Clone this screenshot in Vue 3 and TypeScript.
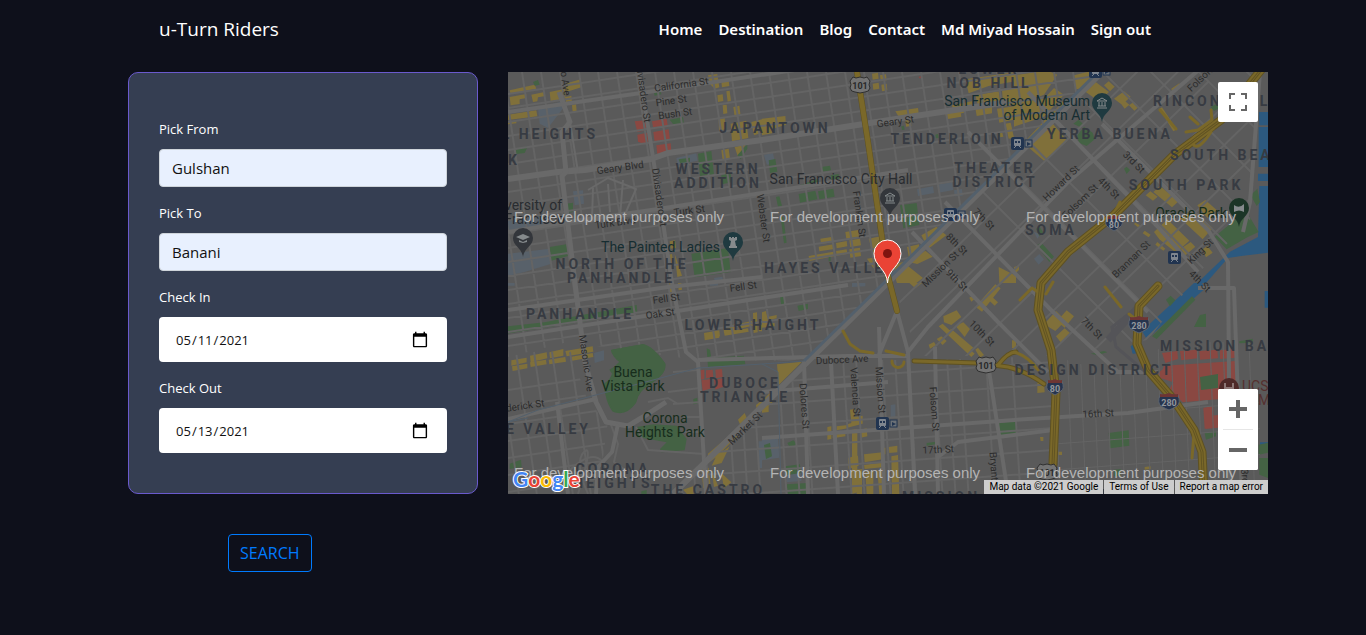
<script setup lang="ts">
import { ref } from 'vue'

interface Tile {
  x: number
  y: number
  shops: string
  parks: string
  clinics?: string
  campus?: string
  water?: string
}
interface Label {
  t: string
  x: number
  y: number
  k: string
  a?: 'start' | 'middle' | 'end'
  r?: number
}

const links = ['Home', 'Destination', 'Blog', 'Contact', 'Md Miyad Hossain', 'Sign out']
const pickFrom = ref('Gulshan')
const pickTo = ref('Banani')
const checkIn = ref('2021-05-11')
const checkOut = ref('2021-05-13')

/* Parallel streets: count lines starting at (x, y), each moved by (sx, sy). */
function streets(x: number, y: number, dx: number, dy: number, sx: number, sy: number, count: number): string {
  let d = ''
  for (let i = 0; i < count; i++) d += `M${x + sx * i} ${y + sy * i}l${dx} ${dy}`
  return d
}

const northGrid = streets(0, 22, 640, -96, 0, 14, 32) + streets(-62, 0, 64, 422, 19, 0, 36)
const southGrid = streets(150, 318, 480, -34, 0, 22, 8) + streets(165, 270, 10, 160, 26, 0, 14) + streets(178, 270, 10, 160, 52, 0, 6)
const eastGrid = streets(520, 348, 240, -18, 0, 26, 5) + streets(533, 270, 6, 160, 13, 0, 18)
const somaGrid = streets(290, 250, 330, -320, 20, 20, 14) + streets(365, 10, 290, 290, 24, -24, 16)
const westGrid = streets(0, 318, 150, -22, 0, 17, 7) + streets(-10, 280, 22, 150, 18, 0, 6)

const tiles: Tile[] = [
  {
    x: 0, y: 0,
    shops: 'M5 55L80 38l5 12L8 66ZM5 75L55 66v12l-20 4v14L8 100ZM70 68l40-8 2 12-22 4-2 12-13 2ZM125 60l47-10v30l-44 8ZM172 35l46-13 4 23-47 15ZM0 128l85-13 3 18-88 11ZM192 100l12-3 2 20-12 2ZM172 75l18-4 2 15-18 4ZM0 150l25-4v8l-25 3ZM600 10l28-4 6 40-14 4-14-14ZM640 28l22-4 2 18-22 4ZM628 70l16-3 2 20-16 3ZM655 58l10-2 4 30-10 3ZM676 105l18-4 4 30-18 4ZM644 100l12-2 2 26-12 2ZM632 142l18-4 3 34-20 4ZM668 155l47-9 6 52-49 10ZM680 225l32-7-22 37ZM640 235l22-5 4 30-22 5ZM730 150l32-8v40l-24 8ZM485 508l16-3 3 22-16 3ZM500 545l22 66-14 4ZM480 548l12-2 4 26-12 2Z',
    parks: 'M75 30l15-6 5 14-15 3ZM20 235l40-13-10 21-25 3ZM485 143l40-8 3 20-30 5ZM570 245l40-8 8 71-42 4ZM175 395l20-3v28l-18 3ZM125 525l50-8 5 35-50 14ZM550 545l110-17 8 72-108 16ZM640 308l28-5 2 28-28 6ZM438 62l20-5 2 10-20 4ZM688 250l30-34v14l-20 32ZM512 262l34-5v12l-30 4Z',
    clinics: 'M380 148l32-3 4 30-28 5ZM432 148l44-8 4 25-44 5ZM388 188l30-6 4 33-22-2-10-4ZM436 180l46-8 4 33-46 5ZM445 220l43-6 2 26-42 10Z',
    campus: 'M90 108l75-20 7 12-52 68-25-13ZM195 358l30-3 3 40-28 5ZM0 545l125-15 5 45-80 25-50 12ZM505 258l60-14 4 22-60 12ZM0 445l110-14 10 30-120 18ZM618 618l25-4 4 18-26 1Z',
  },
  {
    x: 254, y: 0,
    shops: 'M330 5l18-3 2 18-18 3ZM354 10l18-3 2 18-18 3ZM332 35l18-3 2 18-18 3ZM358 38l16-3 2 20-16 3ZM0 140l70-8 2 26-72 22ZM0 170l30-6v20l-30 6ZM400 118l68-10 2 14-60 12ZM430 140l16-2 2 24-16 2ZM610 22l150-22v28l-80 14-60 22ZM640 70l70-12 4 28-66 14ZM720 55l42-8v50l-38 6ZM570 100l60-12 2 16-28 4 2 14-30 6ZM550 126l46-8 2 16-44 8ZM640 108l50-10v26l-46 8ZM705 110l57-8v40l-50 10ZM730 155l16-3 10 45-16 3ZM710 180l10-2 4 16-10 2ZM175 500l38-6 2 16-38 6ZM250 480l38-6 3 20-38 6ZM170 524l45-7 2 14-45 7ZM222 513l32-6 2 16-32 6ZM262 505l32-5 3 20-32 5ZM140 552l74-13 2 14-74 14ZM222 537l32-5 2 14-32 5ZM262 532l32-5 3 25-32 5ZM320 500l36-7 8 50-30 6ZM315 560l70-12 15 30-66 10ZM435 525l36-8 0 24-30 18ZM478 490l45-26 30 26-54 40ZM440 570l50-34 22 18-46 22ZM388 580l35-10 60 48-20 15h-58ZM710 585l52 26v22h-50ZM20 145l5 40-20 3Z',
    parks: 'M20 265l20-4 6 38-22 4ZM178 285l26-4 3 14-28 4ZM110 366l50-10 6 26-52 10ZM168 358l46-8 4 24-46 8ZM414 400l50-7 8 66-48 10ZM108 342l60-22 2 16-60 12ZM206 310l24-4 2 14-24 4ZM418 163l8-2 2 12-8 1ZM520 188l8-2 2 12-8 1ZM56 436l8-2 10 78-8 2ZM42 375l10-2 8 28-12 3ZM200 556l6-2v14h-6Z',
    clinics: 'M470 14l10-2 2 6-10 1Z',
    campus: 'M5 248l28-5 6 30-24 5ZM465 352l48-9 3 20-48 9ZM525 338l45-8 4 24-44 8ZM576 355l24-4 2 20-24 2Z',
  },
  {
    x: 506, y: 0,
    shops: 'M0 10l70-10h40l20 8-40 60-60 22-30 8ZM0 92l90-12 30-32 30 20-60 66-90 30ZM110 130l36-42 16 16-34 44ZM40 200l60-64 60 70-70 60-54-46ZM180 10l40-10h30l-36 48-30 4ZM215 60l30-30 40 30-30 28ZM270 40l14-12 18 16-14 14ZM300 80l30-22 20 16-26 24ZM345 100l14-10 16 14-14 12ZM320 94l12-8 14 12-14 12ZM472 50l24-16 6 10-26 20ZM395 370l14-12 22 16-14 12ZM418 360l20-18 56 46-20 18ZM420 480l40-38 66 64-40 36-50-40ZM500 440l36-28 60 56-30 34ZM550 400l24-16 34 30-28 24ZM500 530l30-20 14 14-30 26ZM566 532l14-10 16 20-20 14ZM364 452l14 8-6 6-12-10ZM392 476l18 12-6 8-18-12ZM430 510l24 20-6 6-24-18ZM0 585l15-5v14l-15 14ZM436 110l8-4 44 66-10 6Z',
    parks: 'M178 155l16-12 14 14-10 8ZM190 190l20-26 26 18 6 20-24 20-24-10ZM330 290l8-6 10 10-10 12ZM68 520l14-8 38 42-14 16ZM602 494l94-78 38 64-34 16-62 36ZM590 105l16-8 12 10-18 10ZM66 470l12-4 10 16-12 10ZM710 370l20-20 8 40-10 12Z',
    campus: 'M60 560l16-14 14 16-16 16ZM60 480l20 6-10 14Z',
    water: 'M734 165h30v120h-30ZM732 305h30v22h-30ZM736 342h26v200l-80 10-40 6-66 75h-26l98-94 84-44ZM734 120h28v40h-26Z',
  },
  {
    x: 0, y: 211,
    shops: 'M10 232l46-8v14l-46 10ZM66 218l50-10 2 18-50 12ZM124 208l42-10v20l-40 8ZM172 204l82-14 2 16-80 14ZM12 250l46-8v14l-44 8ZM66 238l48-8 2 14-48 8ZM122 230l50-8 2 14-50 8ZM186 222l68-12 2 12-68 12ZM484 0h14l2 26-16 2ZM510 0h10l2 20-10 2ZM588 150l46-8 2 18-46 10ZM646 132l36-8v18l-34 8ZM692 122l40-8 2 14-42 10ZM590 160l44-8v12l-44 8ZM648 148l72-12 2 10-72 12ZM735 90l12-2 2 60-12 2ZM752 125h10v20h-10ZM744 366l18-14v30l-14 12ZM600 512l70-60 18 8-60 60-30 22ZM625 520l40-30-24 50-30 8ZM580 560l22-6 6 56-22 6ZM610 558l20 50-12 4ZM640 570l30 28-22 18ZM525 620l30-10 2 23h-20ZM690 410l20-20 6 14-20 20Z',
    parks: 'M0 130L110 118l100-20 176-32 2 24-390 62ZM310 200q50-8 94-16 30 6 68 58 4 30-40 58-40 22-48 60-30 42-70 26-16-20-22-52l-6-30q20-12 26-32l-8-12 34-20Q312 222 310 200ZM596 196l10 4 4 24 98-6 4 26-112 8ZM386 432l50-8 70 4 30 40-6 34-70 6-4-10 20-20-88-16ZM5 542l34-12 2 22-36 6ZM556 348l12-4v18l-12 2ZM88 384l14-8 6 10-16 4ZM400 625l16-4v12h-16Z',
    clinics: 'M577 262l12-2v28l-10 2ZM594 262l20-2 2 22-22 4ZM622 260l20-2 2 24-20 4ZM580 292l28-4 2 28-26 8ZM618 290l28-4 4 24-28 10Z',
    campus: 'M258 210l30-8v30l-28 8ZM752 475h10v80h-10ZM605 0l25-6v14h-25ZM0 0h20v8H0Z',
  },
  {
    x: 254, y: 211,
    shops: 'M442 0h38l-20 16ZM0 88l12-4 4 18 28-6v10l-26 6 0 10 20-2v10l-38 4ZM544 100l40-18 14 20-30 24-22-8ZM530 130l12-8 96 90-10 10ZM500 185l16-8 6 10-18 10ZM580 128l24-10 20 20-16 24ZM554 146l14-8 66 56-12 10ZM524 168l14-8 16 14-12 12ZM640 200l8-6 18 22-12 8ZM650 60l50-56 16 12-56 70-16-12ZM622 44l12-8 8 8-14 12ZM668 40l12-8 28 26-10 10ZM45 244l75-8-70 70ZM0 355l28-30 6 30-14 14v18l-20 2ZM264 380l14-2v24l24-4v24l-46 12v-10l12-4ZM196 432l12-2v38l-12 2ZM224 430l34-4v10l-34 6ZM270 440l16-2v190l-16 5ZM212 456l38-6v10l-38 6ZM258 524l30-6 2 30-30 10ZM294 440l20-4 2 24-20 4ZM358 494h12v20l-12 2ZM380 492l26-4v20l-24 2ZM306 514l56-6 4 20-58 10ZM306 546l60-8 2 14-60 6ZM388 520l20-4 4 117h-22ZM284 560l16-2v75h-16ZM310 566l24-2v69h-20ZM346 562l24-2v73h-18ZM750 172h12v24h-12Z',
    parks: 'M54 40l10-4 4 28-10 4ZM106 68l32-6v16l-28 6ZM6 486l18-6 6 40-18 8ZM76 480l18-8 12 12-22 10ZM70 550l44-6 2 26-40 6ZM74 604l62-4v33H78ZM702 422l60-8v46l-56 4ZM494 480l26-4v8l-26 4Z',
    campus: 'M0 470l48-6 4 60-52 8ZM386 366l14-2v40l-14 2ZM72 574l46-6v26l-44 4ZM270 0h40v10l-40 2Z',
  },
  {
    x: 506, y: 211,
    shops: 'M90 124l36-40 16 16 16-18 22 18-28 34-10-8-18 18ZM126 160l26-24 16 14-26 30ZM70 300l20-2 2 30-22 2ZM78 462h10v12H80ZM392 552l18-2v8l-18 2ZM0 172l6 6v26l-6 0ZM132 506h12v10h-12Z',
    parks: 'M284 450l60-8 2 46-58 8ZM540 132l18-36 18-4v40ZM414 160l120-120 10 10-116 118ZM456 50l14-12 14 14-16 18ZM572 450l34-6v16l-30 10ZM734 485l28-6v30l-28 6ZM736 525h26v60l-26-10ZM0 412l8-2v48H0ZM230 212l40-8 10 4-30 8ZM300 560l20-2v20l-20 2ZM676 175l40-8v12l-40 2Z',
    clinics: 'M444 210l46-6 2 24-38 12ZM498 204l52-4v26l-48 6ZM556 204l54-4 2 26-54 4ZM618 202l44-4 2 26-46 4ZM450 248l216-14v110L506 358l-40-40 12-20-40-14ZM432 270l24-18 10 16-28 24ZM568 374l30-6v40l-26 30ZM580 400l32-4v38l-38 4Z',
    water: 'M540 0h24l8 18L398 168l-14-24ZM350 190l26-18v38l-20 2ZM752 24h10v50h-10ZM738 478h24v12h-24Z',
  },
]

const parkOverlay = 'M692 305L710 302 710 316 693 318Z'
const bayshore = 'M753 -2L713 48 666 83 606 143 560 180 533 211 530 238 543 278 548 320 545 392'
const southern = 'M650 214L631 234 629 272 640 298 666 328 686 358 694 380 696 422'

const labels: Label[] = [
  { t: 'L HEIGHTS', x: 90, y: 62, k: 'area', a: 'end' },
  { t: 'K', x: 0, y: 88, k: 'area', a: 'start' },
  { t: 'JAPANTOWN', x: 267, y: 56, k: 'area' },
  { t: 'LOWER', x: 481, y: -3, k: 'area' },
  { t: 'NOB HILL', x: 481, y: 11, k: 'area' },
  { t: 'RINCON HILL', x: 645, y: 29, k: 'area', a: 'start' },
  { t: 'YERBA BUENA', x: 602, y: 62, k: 'area' },
  { t: 'SOUTH BEACH', x: 662, y: 83, k: 'area', a: 'start' },
  { t: 'SOUTH PARK', x: 678, y: 113, k: 'area' },
  { t: 'SOMA', x: 543, y: 158, k: 'area' },
  { t: 'TENDERLOIN', x: 439, y: 67, k: 'area' },
  { t: 'THEATER', x: 487, y: 96, k: 'area' },
  { t: 'DISTRICT', x: 487, y: 110, k: 'area' },
  { t: 'WESTERN', x: 210, y: 97, k: 'area' },
  { t: 'ADDITION', x: 210, y: 111, k: 'area' },
  { t: 'NORTH OF THE', x: 114, y: 192, k: 'area' },
  { t: 'PANHANDLE', x: 113, y: 206, k: 'area' },
  { t: 'HAYES VALLEY', x: 256, y: 196, k: 'area', a: 'start' },
  { t: 'PANHANDLE', x: 72, y: 242, k: 'area' },
  { t: 'LOWER HAIGHT', x: 245, y: 253, k: 'area' },
  { t: 'MISSION BAY', x: 652, y: 274, k: 'area', a: 'start' },
  { t: 'DESIGN DISTRICT', x: 586, y: 298, k: 'area' },
  { t: 'DUBOCE', x: 237, y: 311, k: 'area' },
  { t: 'TRIANGLE', x: 237, y: 325, k: 'area' },
  { t: 'E VALLEY', x: 83, y: 357, k: 'area', a: 'end' },
  { t: 'CORONA', x: 105, y: 397, k: 'area' },
  { t: 'HEIGHTS', x: 105, y: 411, k: 'area' },
  { t: 'THE CASTRO', x: 200, y: 418, k: 'area' },
  { t: 'MISSION', x: 433, y: 425, k: 'area' },
  { t: 'POTRERO HILL', x: 600, y: 423, k: 'area' },
  { t: 'San Francisco Museum', x: 582, y: 29, k: 'sight', a: 'end' },
  { t: 'of Modern Art', x: 582, y: 43, k: 'sight', a: 'end' },
  { t: 'San Francisco City Hall', x: 333, y: 107, k: 'place' },
  { t: 'The Painted Ladies', x: 212, y: 175, k: 'sight', a: 'end' },
  { t: 'University of', x: 54, y: 133, k: 'place', a: 'end' },
  { t: 'San Francisco', x: 57, y: 147, k: 'place', a: 'end' },
  { t: 'Oracle Park', x: 683, y: 141, k: 'park' },
  { t: 'Buena', x: 125, y: 300, k: 'park' },
  { t: 'Vista Park', x: 125, y: 314, k: 'park' },
  { t: 'Corona', x: 157, y: 346, k: 'park' },
  { t: 'Heights Park', x: 157, y: 360, k: 'park' },
  { t: 'UCSF', x: 734, y: 314, k: 'medical', a: 'start' },
  { t: 'Medical', x: 750, y: 328, k: 'medical', a: 'start' },
  { t: 'California St', x: 173, y: 11, k: 'road', r: -8 },
  { t: 'Pine St', x: 163, y: 27, k: 'road', r: -8 },
  { t: 'Bush St', x: 167, y: 40, k: 'road', r: -8 },
  { t: 'Geary St', x: 387, y: 48, k: 'road', r: -8 },
  { t: 'Geary Blvd', x: 112, y: 94, k: 'road', r: -8 },
  { t: 'Turk St', x: 181, y: 137, k: 'road', r: -8 },
  { t: 'Turk Blvd', x: 107, y: 149, k: 'road', r: -8 },
  { t: 'Presidio Ave', x: 57, y: -4, k: 'road', r: 82 },
  { t: 'Divisadero St', x: 137, y: 21, k: 'road', r: 82 },
  { t: 'Divisadero St', x: 153, y: 125, k: 'road', r: 82 },
  { t: 'Webster St', x: 257, y: 146, k: 'road', r: 82 },
  { t: 'Franklin St', x: 353, y: 142, k: 'road', r: 82 },
  { t: 'Fell St', x: 235, y: 213, k: 'road', r: -8 },
  { t: 'Fell St', x: 158, y: 225, k: 'road', r: -8 },
  { t: 'Oak St', x: 152, y: 240, k: 'road', r: -8 },
  { t: 'Masonic Ave', x: 80, y: 291, k: 'road', r: 82 },
  { t: 'Frederick St', x: 10, y: 333, k: 'road', r: -8 },
  { t: 'Market St', x: 236, y: 355, k: 'road', r: -44 },
  { t: 'Duboce Ave', x: 334, y: 286, k: 'road', r: -3 },
  { t: 'Dolores St', x: 298, y: 334, k: 'road', r: 86 },
  { t: 'Valencia St', x: 349, y: 320, k: 'road', r: 86 },
  { t: 'Mission St', x: 374, y: 318, k: 'road', r: 86 },
  { t: 'Folsom St', x: 428, y: 337, k: 'road', r: 86 },
  { t: 'Bryant St', x: 488, y: 400, k: 'road', r: 86 },
  { t: '17th St', x: 430, y: 376, k: 'road', r: -3 },
  { t: '16th St', x: 590, y: 340, k: 'road', r: -3 },
  { t: '10th St', x: 475, y: 260, k: 'road', r: 45 },
  { t: '7th St', x: 585, y: 255, k: 'road', r: 45 },
  { t: '9th St', x: 450, y: 207, k: 'road', r: 45 },
  { t: '8th St', x: 450, y: 171, k: 'road', r: 45 },
  { t: '7th St', x: 477, y: 146, k: 'road', r: 45 },
  { t: 'Mission St', x: 431, y: 196, k: 'road', r: -44 },
  { t: 'Howard St', x: 552, y: 110, k: 'road', r: -44 },
  { t: 'Folsom St', x: 571, y: 128, k: 'road', r: -44 },
  { t: 'Folsom St', x: 696, y: 1, k: 'road', r: -44 },
  { t: '3rd St', x: 627, y: 89, k: 'road', r: 45 },
  { t: '4th St', x: 602, y: 115, k: 'road', r: 45 },
  { t: 'Brannan St', x: 622, y: 186, k: 'road', r: -44 },
  { t: 'King St', x: 691, y: 178, k: 'road', r: -44 },
  { t: '4th St', x: 693, y: 208, k: 'road', r: 45 },
  { t: '3rd St', x: 739, y: 410, k: 'road', r: 86 },
]

const pins = [
  { x: 382, y: 127, c: '#33363b', icon: 'hall' },
  { x: 15, y: 167, c: '#33363b', icon: 'cap' },
  { x: 225, y: 171, c: '#1f3a40', icon: 'rook' },
  { x: 594, y: 32, c: '#1f3a40', icon: 'hall' },
  { x: 731, y: 137, c: '#1c3527', icon: 'ball' },
]
const stations = [
  { x: 509, y: 71 },
  { x: 587, y: -1 },
  { x: 442, y: 142 },
  { x: 666, y: 185 },
  { x: 374, y: 351 },
]
const interstates = [
  { x: 606, y: 151, t: '80' },
  { x: 547, y: 315, t: '80' },
  { x: 631, y: 252, t: '280' },
  { x: 661, y: 329, t: '280' },
]
const usRoutes = [
  { x: 352, y: 13 },
  { x: 478, y: 293 },
  { x: 539, y: 400 },
]
const watermarks = [145, 401].flatMap((y) => [6, 262, 518].map((x) => ({ x, y })))
</script>

<template>
  <div class="page">
    <header class="topbar">
      <a class="brand" href="#">u-Turn Riders</a>
      <nav class="nav">
        <a v-for="link in links" :key="link" href="#">{{ link }}</a>
      </nav>
    </header>

    <main class="layout">
      <form class="booking" @submit.prevent>
        <div class="card">
          <div class="field">
            <label for="from">Pick From</label>
            <input id="from" v-model="pickFrom" class="text" type="text" />
          </div>
          <div class="field">
            <label for="to">Pick To</label>
            <input id="to" v-model="pickTo" class="text" type="text" />
          </div>
          <div class="field">
            <label for="in">Check In</label>
            <input id="in" v-model="checkIn" class="date" type="date" />
          </div>
          <div class="field">
            <label for="out">Check Out</label>
            <input id="out" v-model="checkOut" class="date" type="date" />
          </div>
        </div>
        <button class="search" type="submit">SEARCH</button>
      </form>

      <section class="map" aria-label="Map">
        <svg class="canvas" viewBox="0 0 760 422" preserveAspectRatio="xMidYMid slice">
          <defs>
            <clipPath id="north"><path d="M0 0H594L296 289 188 288 60 270 0 285Z" /></clipPath>
            <clipPath id="soma"><path d="M594 0H752L742 150 700 190 640 268 545 284 410 284 384 208Z" /></clipPath>
            <clipPath id="south"><path d="M254 336L300 288H420L545 284V422H165Z" /></clipPath>
            <clipPath id="east"><path d="M545 284L600 300 640 284 752 210V422H545Z" /></clipPath>
            <clipPath id="west"><path d="M0 285L60 270 80 330 100 350 90 422H0Z" /></clipPath>
          </defs>
          <rect width="760" height="422" fill="#5a5a5a" />

          <g v-for="(tile, i) in tiles" :key="i" :transform="`translate(${tile.x} ${tile.y}) scale(0.33333)`">
            <path :d="tile.campus" fill="#58616a" />
            <path :d="tile.water" fill="#2c597f" />
            <path :d="tile.shops" fill="#80703a" />
            <path :d="tile.parks" fill="#446244" />
            <path :d="tile.clinics" fill="#8a4842" />
          </g>

          <g fill="none" stroke="#646464" stroke-width="2">
            <path clip-path="url(#north)" :d="northGrid" />
            <path clip-path="url(#soma)" :d="somaGrid" />
            <path clip-path="url(#south)" :d="southGrid" />
            <path clip-path="url(#east)" :d="eastGrid" stroke-width="1" />
            <path clip-path="url(#west)" :d="westGrid" />
            <path d="M102 350L110 372 106 390 120 400M140 330L160 326 170 332M128 355L140 378 196 382M165 300L190 298M160 320L192 316M165 332L194 330M176 345H195M176 360H196M80 422Q66 390 76 380T70 422M60 400Q90 370 100 400" />
          </g>
          <path d="M103 278L135 272Q145 274 157 291 160 300 144 311 130 318 128 330 118 344 106 339 98 326 97 311 108 304 105 296 L113 288Q103 284 103 278Z" fill="#446244" />
          <path :d="parkOverlay" fill="#446244" />
          <g fill="none" stroke="#696969" stroke-width="4" stroke-linejoin="round">
            <path d="M0 107L50 100 77 98 143 87 160 81 254 68 330 56 420 42 500 30" stroke-width="6" />
            <path d="M131 0L141 60 152 130 164 211 178 280 190 290 198 422" />
            <path d="M51 20L62 50 54 60 58 100 54 104 67 211 77 290 88 330 98 350 120 354 135 345 158 330" stroke-width="5" />
            <path d="M0 40L140 20 300 -4M0 160L60 150 150 137 254 121 400 98M0 265L254 226 340 213M0 238L160 215 254 205" />
            <path d="M0 347L88 327M110 352L104 380 90 395 88 422M49 330L60 422M190 288L340 284 400 284" />
            <path d="M594 0L165 422" stroke-width="6" />
            <path d="M389 239L400 280 407 422M370 285L389 239M400 280L420 255 560 110 700 -10M296 289L300 422M371 255L376 422M323 290L330 422M427 275L430 422M254 366L520 347 620 341 700 330M254 320L380 310" />
            <path d="M594 52L700 158 720 190 722 422M520 20L650 155 690 200M437 130L545 240 610 300M404 160L490 250 540 300M460 60L640 240" />
            <path d="M752 0L742 130 735 160M690 216L726 216 729 300 734 422M600 300L650 300M480 292L500 422M430 385L450 370 545 358" />
            <path d="M80 118L100 106 128 117 118 140 78 150M85 116L84 146M100 112L102 140M62 50L70 100M115 108L112 145" stroke-width="2" />
          </g>
          <g fill="none" stroke="#53606c" stroke-width="2">
            <path d="M590 0L384 203 296 289" stroke-width="3" />
            <path d="M0 350L30 338 130 312 190 296 254 292 296 289M254 292L270 300 273 422M0 350L20 346" stroke-width="1" />
          </g>
          <g fill="none" stroke="#545458" stroke-width="7">
            <path d="M646 222L604 255 608 275 640 302" stroke-width="3" />
            <path d="M640 225L600 268" />
          </g>

          <g fill="none" stroke-linejoin="round" stroke-linecap="round">
            <g stroke="#5e5122">
              <path d="M349 0L360 70 379 200 389 239" stroke-width="6" />
              <path d="M406 289L470 291 500 295Q520 300 536 312M490 293Q500 280 508 280" stroke-width="5" />
              <path :d="bayshore" stroke-width="9" />
              <path :d="southern" stroke-width="9" />
            </g>
            <g stroke="#7a6829">
              <path d="M349 0L360 70 379 200 389 239" stroke-width="5" />
              <path d="M406 289L470 291 500 295Q520 300 536 312M490 293Q500 280 508 280" stroke-width="3" />
              <path :d="bayshore" stroke-width="7" />
              <path :d="southern" stroke-width="7" />
              <path d="M335 259L342 272 352 279 365 281M384 289A6 6 0 1 0 396 290M378 279L396 283M597 215L613 235M621 242L626 246M678 60L690 58 704 48 703 38M690 52L682 45M703 60Q690 80 685 72T705 57M652 38L668 57M612 130L602 150M506 280Q520 284 530 298M512 228L524 216 530 220M545 210L538 222M686 362L684 386" stroke-width="3" />
            </g>
            <g stroke="#625423" stroke-width="3">
              <path :d="bayshore" />
              <path :d="southern" />
            </g>
            <g stroke="#7a6829" stroke-width="1">
              <path :d="bayshore" />
              <path :d="southern" />
            </g>
          </g>

          <g v-for="(s, i) in stations" :key="'s' + i" :transform="`translate(${s.x} ${s.y})`">
            <rect x="-6" y="-6" width="13" height="13" rx="2" fill="#213450" />
            <rect x="-3" y="-4" width="7" height="7" rx="1" fill="#7f868f" />
            <path d="M-2 -2h2v2h-2zM1 -2h2v2h-2z" fill="#213450" />
            <path d="M-3 5l2-2M4 5l-2-2" stroke="#7f868f" />
            <template v-if="i !== 3">
              <rect x="8" y="-3" width="7" height="7" fill="#6b7177" stroke="#213450" />
              <path d="M10 -1l4 2-4 2z" fill="#213450" />
            </template>
          </g>

          <text
            v-for="(l, i) in labels"
            :key="'l' + i"
            :class="l.k"
            :text-anchor="l.a ?? 'middle'"
            dy="5"
            :transform="`translate(${l.x} ${l.y}) rotate(${l.r ?? 0})`"
          >{{ l.t }}</text>

          <g v-for="(s, i) in interstates" :key="'i' + i" :transform="`translate(${s.x} ${s.y})`">
            <path :d="s.t === '80' ? 'M-7-6q4 1 7-1 3 2 7 1 3 8-1 10-4 3-6 4-2-1-6-4-4-2-1-10Z' : 'M-9-6q5 1 9-1 4 2 9 1 3 8-1 11-5 3-8 4-3-1-8-4-4-3-1-11Z'" fill="#26344e" stroke="#5d646e" stroke-width="1" />
            <path :d="s.t === '80' ? 'M-7-7q4 1 7-1 3 2 7 1v3h-14Z' : 'M-9-7q5 1 9-1 4 2 9 1v3h-18Z'" fill="#6e3533" />
            <text class="shield light" text-anchor="middle" y="5">{{ s.t }}</text>
          </g>
          <g v-for="(s, i) in usRoutes" :key="'u' + i" :transform="`translate(${s.x} ${s.y})`">
            <path d="M-7-8l3 1 4-1 4 1 3-1 3 4q-2 4 0 7-1 4-5 4l-5 1-5-1q-4 0-5-4 2-3 0-7Z" fill="#747474" stroke="#303030" stroke-width="1" />
            <text class="shield" text-anchor="middle" y="4">101</text>
          </g>

          <g v-for="(p, i) in pins" :key="'p' + i" :transform="`translate(${p.x} ${p.y})`">
            <path d="M0 18C-1 9-10 7-10-1A10 10 0 0 1 10-1C10 7 1 9 0 18Z" :fill="p.c" />
            <g fill="none" stroke="#858a8c" stroke-width="1">
              <path v-if="p.icon === 'hall'" d="M-5 4H5M-4 2H4M-3-2V2M0-2V2M3-2V2M-5-3H5L0-6Z" />
              <path v-else-if="p.icon === 'cap'" d="M-7-2L0-5 7-2 0 1ZM-4 1V3L0 4 4 3V1L0 3ZM6-1V3" fill="#858a8c" stroke="none" />
              <path v-else-if="p.icon === 'rook'" d="M-4-6H-2V-5H-1V-6H1V-5H2V-6H4V-3L2-2 3 3H4V5H-4V3H-3L-2-2-4-3Z" fill="#858a8c" stroke="none" />
              <path v-else d="M-5-4Q0 0 5-5V3Q0 0-5 3Z" fill="#858a8c" stroke="none" />
            </g>
          </g>
          <circle cx="721" cy="316" r="10" fill="#4f2a29" />
          <path d="M717 311V321M725 311V321M717 316H725" stroke="#8d7776" stroke-width="2" />

          <text v-for="(w, i) in watermarks" :key="'w' + i" class="watermark" :x="w.x" :y="w.y" dy="5">For development purposes only</text>

          <path d="M379.500 211C379 197 366 194 366 181.500A13.500 13.500 0 0 1 393 181.500C393 194 380 197 379.500 211Z" fill="#ea4335" stroke="#fff" stroke-width="1" />
          <circle cx="379.500" cy="181.500" r="4.500" fill="#7f1410" />
          <text class="logo" x="5" y="415"><tspan fill="#4285f4">G</tspan><tspan fill="#ea4335">o</tspan><tspan fill="#fbbc04">o</tspan><tspan fill="#4285f4">g</tspan><tspan fill="#34a853">l</tspan><tspan fill="#ea4335">e</tspan></text>
        </svg>

        <button class="control full" type="button" aria-label="Toggle fullscreen view">
          <svg width="18" height="18" viewBox="0 0 18 18"><path d="M0 0h6v2H2v4H0zM12 0h6v6h-2V2h-4zM0 12h2v4h4v2H0zM16 12h2v6h-6v-2h4z" fill="#666" /></svg>
        </button>
        <div class="zoom">
          <button class="control" type="button" aria-label="Zoom in">
            <svg width="18" height="18" viewBox="0 0 18 18"><path d="M7 0h4v7h7v4h-7v7H7v-7H0V7h7z" fill="#666" /></svg>
          </button>
          <span class="rule"></span>
          <button class="control" type="button" aria-label="Zoom out">
            <svg width="18" height="18" viewBox="0 0 18 18"><path d="M0 7h18v4H0z" fill="#666" /></svg>
          </button>
        </div>
        <footer class="credits">
          <span>Map data ©2021 Google</span>
          <a href="#">Terms of Use</a>
          <a href="#">Report a map error</a>
        </footer>
      </section>
    </main>
  </div>
</template>

<style>
body {
  margin: 0;
  background: #0e101b;
}
</style>

<style scoped>
.page {
  box-sizing: border-box;
  min-height: 100vh;
  background: #0e101b;
  color: #fff;
  font-family: "Segoe UI", "Open Sans", "Noto Sans", sans-serif;
}
.topbar,
.layout {
  box-sizing: border-box;
  max-width: 1170px;
  margin: 0 auto;
  padding-left: 30px;
}
.topbar {
  display: flex;
  align-items: center;
  justify-content: space-between;
  height: 57px;
  padding-left: 61px;
  padding-right: 117px;
}
.topbar a {
  color: #fff;
  text-decoration: none;
}
.brand {
  font-size: 19px;
}
.nav {
  display: flex;
  gap: 16px;
  font-family: "Segoe UI", "Noto Sans", "Open Sans", sans-serif;
  font-size: 15px;
  font-weight: 600;
}
.layout {
  display: grid;
  grid-template-columns: 350px minmax(0, 1fr);
  gap: 30px;
  margin-top: 15px;
  align-items: start;
}
.card {
  display: flex;
  flex-direction: column;
  gap: 15px;
  padding: 45px 30px 40px;
  border: 1px solid #6a5acd;
  border-radius: 10px;
  background: #353e52;
}
.field {
  display: flex;
  flex-direction: column;
  gap: 9px;
}
label {
  font-size: 13px;
  line-height: 22px;
}
input {
  box-sizing: border-box;
  width: 100%;
  border-radius: 4px;
  color: #111;
  font-family: inherit;
}
.text {
  height: 38px;
  padding: 6px 12px;
  border: 1px solid #ced4da;
  background: #e8f0fe;
  font-size: 15px;
}
.date {
  height: 45px;
  padding: 0 16px;
  border: 0;
  background: #fff;
  font-size: 13px;
}
.date::-webkit-calendar-picker-indicator {
  width: 18px;
  height: 18px;
}
.search {
  height: 38px;
  margin: 40px 0 0 100px;
  padding: 0 11px;
  border: 1px solid #007bff;
  border-radius: 4px;
  background: transparent;
  color: #007bff;
  font-family: inherit;
  font-size: 16px;
}
.map {
  position: relative;
  height: 422px;
  overflow: hidden;
}
.canvas {
  display: block;
  width: 100%;
  height: 100%;
  font-family: Roboto, sans-serif;
}
.area {
  fill: #373b42;
  font-size: 14px;
  font-weight: 700;
  letter-spacing: 3px;
}
.sight,
.place,
.park,
.medical {
  font-size: 14px;
}
.sight {
  fill: #162d31;
}
.place {
  fill: #292c30;
}
.park {
  fill: #172d1c;
}
.medical {
  fill: #55302f;
}
.road {
  fill: #2c2c2c;
  font-size: 10px;
}
.shield {
  fill: #292929;
  font-size: 9px;
  font-weight: 700;
}
.shield.light {
  fill: #92969c;
}
.watermark {
  fill: #b4b4b4;
  font-family: "Liberation Sans", Arial, sans-serif;
  font-size: 15px;
}
.logo {
  font-family: Lato, sans-serif;
  font-size: 21px;
  font-weight: 700;
  stroke: #fff;
  stroke-width: 2px;
  paint-order: stroke;
}
.control {
  display: flex;
  align-items: center;
  justify-content: center;
  width: 40px;
  height: 40px;
  padding: 0;
  border: 0;
  border-radius: 2px;
  background: #fff;
}
.full {
  position: absolute;
  top: 10px;
  right: 10px;
}
.zoom {
  position: absolute;
  right: 10px;
  bottom: 24px;
  border-radius: 2px;
  background: #fff;
}
.rule {
  display: block;
  height: 1px;
  margin: 0 5px;
  background: #e6e6e6;
}
.credits {
  position: absolute;
  right: 0;
  bottom: 0;
  display: flex;
  gap: 1px;
  font: 10px/14px Roboto, sans-serif;
}
.credits > * {
  padding: 0 5px;
  background: #cdcdcd;
  color: #000;
  text-decoration: none;
}
</style>
